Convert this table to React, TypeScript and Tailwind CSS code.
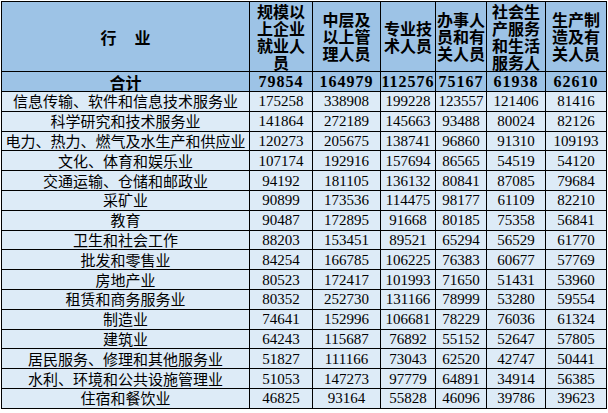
const rows: [string, number, number, number, number, number, number][] = [
    ['信息传输、软件和信息技术服务业', 175258, 338908, 199228, 123557, 121406, 81416],
    ['科学研究和技术服务业', 141864, 272189, 145663, 93488, 80024, 82126],
    ['电力、热力、燃气及水生产和供应业', 120273, 205675, 138741, 96860, 91310, 109193],
    ['文化、体育和娱乐业', 107174, 192916, 157694, 86565, 54519, 54120],
    ['交通运输、仓储和邮政业', 94192, 181105, 136132, 80841, 87085, 79684],
    ['采矿业', 90899, 173536, 114475, 98177, 61109, 82210],
    ['教育', 90487, 172895, 91668, 80185, 75358, 56841],
    ['卫生和社会工作', 88203, 153451, 89521, 65294, 56529, 61770],
    ['批发和零售业', 84254, 166785, 106225, 76383, 60677, 57769],
    ['房地产业', 80523, 172417, 101993, 71650, 51431, 53960],
    ['租赁和商务服务业', 80352, 252730, 131166, 78999, 53280, 59554],
    ['制造业', 74641, 152996, 106681, 78229, 76036, 61324],
    ['建筑业', 64243, 115687, 76892, 55152, 52647, 57805],
    ['居民服务、修理和其他服务业', 51827, 111166, 73043, 62520, 42747, 50441],
    ['水利、环境和公共设施管理业', 51053, 147273, 97779, 64891, 34914, 56385],
    ['住宿和餐饮业', 46825, 93164, 55828, 46096, 39786, 39623],
];

const headers = [
    ['规模以', '上企业', '就业人', '员'],
    ['中层及', '以上管', '理人员'],
    ['专业技', '术人员'],
    ['办事人', '员和有', '关人员'],
    ['社会生', '产服务', '和生活', '服务人'],
    ['生产制', '造及有', '关人员'],
];

const totals = [79854, 164979, 112576, 75167, 61938, 62610];

const cjk = "font-['Noto_Sans_CJK_SC',sans-serif]";
const serif = "font-['Liberation_Serif','Times_New_Roman',serif]";

export default function App() {
    return (
        <div className="min-h-[413px] w-[608px] bg-white p-px">
            <table className="w-[605px] table-fixed border-collapse text-black">
                <colgroup>
                    <col className="w-[248px]" />
                    <col className="w-[63px]" />
                    <col className="w-[68px]" />
                    <col className="w-[55px]" />
                    <col className="w-[51px]" />
                    <col className="w-[59px]" />
                    <col className="w-[61px]" />
                </colgroup>
                <thead>
                    {/* Header */}
                    <tr className="h-[70px] bg-[#9dc3e6]">
                        <th className={`border border-black p-0 text-center text-[16px] font-bold ${cjk}`}>
                            <span>行</span>
                            <span className="ml-[18px]">业</span>
                        </th>
                        {headers.map((lines, i) => (
                            <th key={i} className={`border border-black p-0 text-center text-[16px] leading-[17px] font-bold ${cjk}`}>
                                {lines.map((l, j) => (
                                    <div key={j} className="whitespace-nowrap">{l}</div>
                                ))}
                            </th>
                        ))}
                    </tr>
                    {/* Total */}
                    <tr className="h-[20px] bg-[#9dc3e6]">
                        <td className={`border border-black p-0 text-center text-[16px] leading-[18px] font-bold ${cjk}`}>合计</td>
                        {totals.map((n, i) => (
                            <td key={i} className={`border border-black p-0 text-center text-[16px] leading-[18px] font-bold tracking-[1px] ${serif}`}>
                                {n}
                            </td>
                        ))}
                    </tr>
                </thead>
                <tbody>
                    {rows.map(([name, ...nums]) => (
                        <tr key={name} className="h-[19.8px] bg-[#ddebf7]">
                            <td className={`border border-black p-0 text-center text-[15px] leading-[18px] ${cjk}`}>{name}</td>
                            {nums.map((n, i) => (
                                <td key={i} className={`border border-black p-0 text-center text-[15px] leading-[18px] ${serif}`}>
                                    {n}
                                </td>
                            ))}
                        </tr>
                    ))}
                </tbody>
            </table>
        </div>
    );
}
